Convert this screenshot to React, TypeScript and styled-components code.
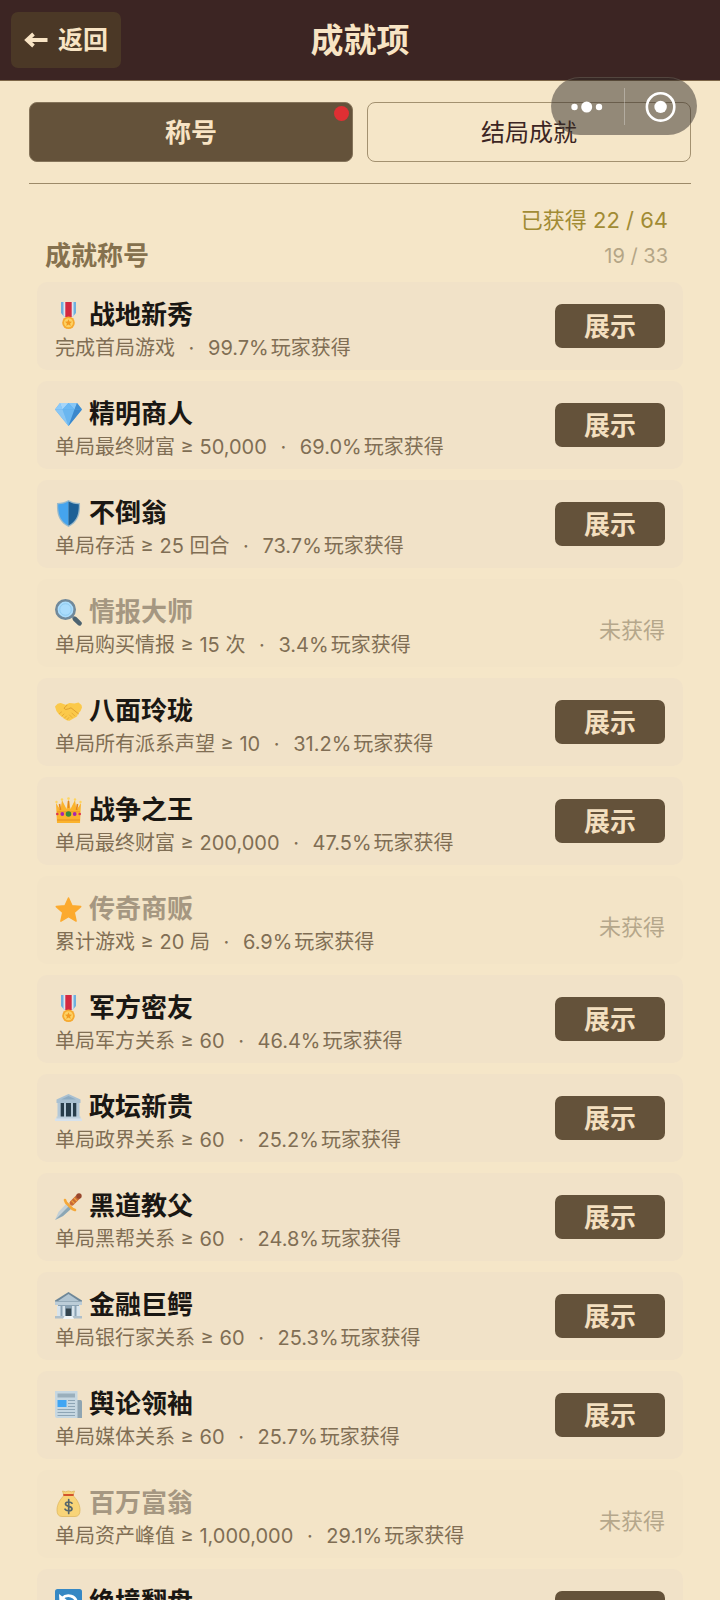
import React from "react";
import styled, { createGlobalStyle } from "styled-components";

const GlobalStyle = createGlobalStyle`
  *, *::before, *::after { box-sizing: border-box; }
  body {
    margin: 0;
    background: #f5e6c8;
    font-family: Inter, "Noto Sans CJK SC", sans-serif;
  }
  button { font-family: inherit; cursor: pointer; }
`;

const Screen = styled.div`
  display: flex;
  flex-direction: column;
  height: 100vh;
  overflow: hidden;
  background: #f5e6c8;
`;

const Header = styled.header`
  display: grid;
  grid-template-columns: 1fr auto 1fr;
  align-items: center;
  flex: none;
  height: 81px;
  padding: 0 11px;
  background: #3c2523;
  border-bottom: 1px solid #7d6648;
`;

const BackButton = styled.button`
  justify-self: start;
  display: flex;
  align-items: center;
  gap: 9px;
  height: 56px;
  padding: 0 13px;
  border: 0;
  border-radius: 7px;
  background: #4b3826;
  color: #f8e4c4;
  font-size: 25px;
  font-weight: 700;
  line-height: 36px;
`;

const PageTitle = styled.h1`
  margin: 0;
  color: #f8e4c4;
  font-size: 33px;
  font-weight: 700;
  line-height: 48px;
`;

const Capsule = styled.div`
  position: absolute;
  z-index: 2;
  top: 77px;
  right: 23px;
  display: flex;
  align-items: center;
  width: 146px;
  height: 58px;
  border: 1px solid rgba(150, 140, 125, 0.3);
  border-radius: 29px;
  background: rgba(50, 44, 40, 0.5);
`;

const CapsuleButton = styled.button`
  display: flex;
  flex: 1;
  align-items: center;
  justify-content: center;
  height: 100%;
  padding: 0;
  border: 0;
  background: none;
`;

const CapsuleRule = styled.span`
  width: 1px;
  height: 37px;
  background: rgba(255, 255, 255, 0.3);
`;

const Main = styled.main`
  flex: 1;
  min-height: 0;
  padding: 21px 29px 0;
  overflow-y: auto;
  scrollbar-width: none;
`;

const Tabs = styled.div`
  display: flex;
  gap: 14px;
  padding-bottom: 21px;
  border-bottom: 1px solid #9c8a69;
`;

const Tab = styled.button<{ $active?: boolean }>`
  position: relative;
  flex: 1;
  height: 60px;
  padding: 1px 0 0;
  border: 1px solid ${(p) => (p.$active ? "#85745a" : "#a39170")};
  border-radius: 8px;
  background: ${(p) => (p.$active ? "#64523a" : "transparent")};
  color: ${(p) => (p.$active ? "#f8e4c4" : "#3c2523")};
  font-size: ${(p) => (p.$active ? 26 : 24)}px;
  font-weight: ${(p) => (p.$active ? 700 : 400)};
  line-height: 36px;
`;

const UnreadDot = styled.span`
  position: absolute;
  top: 3px;
  right: 3px;
  width: 15px;
  height: 15px;
  border-radius: 50%;
  background: #df2f33;
`;

const Total = styled.p`
  margin: 20px 23px 0 0;
  color: #a18b34;
  font-size: 22px;
  line-height: 32px;
  text-align: right;
`;

const SectionHead = styled.div`
  display: flex;
  align-items: center;
  justify-content: space-between;
  margin-top: 2px;
  padding: 0 23px 0 16px;
`;

const SectionTitle = styled.h2`
  margin: 0;
  color: #85714e;
  font-size: 26px;
  font-weight: 700;
  line-height: 36px;
`;

const SectionCount = styled.span`
  color: #b4a586;
  font-size: 20px;
  line-height: 28px;
`;

const List = styled.ul`
  display: flex;
  flex-direction: column;
  gap: 11px;
  margin: 8px 0 0;
  padding: 0 8px 24px;
  list-style: none;
`;

const Row = styled.li<{ $locked?: boolean }>`
  display: flex;
  align-items: center;
  justify-content: space-between;
  flex: none;
  height: 88px;
  padding: 0 18px;
  border-radius: 10px;
  background: ${(p) => (p.$locked ? "#f3e4c7" : "#f1e2c8")};
`;

const RowText = styled.div`
  display: flex;
  flex-direction: column;
  align-self: flex-start;
  padding-top: 15px;
`;

const RowTitle = styled.h3<{ $locked?: boolean }>`
  display: flex;
  align-items: center;
  gap: 7px;
  margin: 0;
  color: ${(p) => (p.$locked ? "#a59781" : "#1a1713")};
  font-size: 26px;
  font-weight: 700;
  line-height: 36px;
`;

const Detail = styled.p`
  display: flex;
  margin: 0;
  color: #806e54;
  font-size: 20px;
  line-height: 30px;
  white-space: nowrap;
`;

const Separator = styled.span`
  width: 33px;
  text-align: center;
`;

const Rate = styled.span`
  margin-right: 2px;
`;

const ShowButton = styled.button`
  width: 110px;
  height: 44px;
  padding: 2px 0 0;
  border: 0;
  border-radius: 7px;
  background: #64523a;
  color: #f3dfbf;
  font-size: 26px;
  font-weight: 700;
  line-height: 36px;
`;

const LockedLabel = styled.span`
  padding-top: 14px;
  color: #b5a78b;
  font-size: 22px;
  line-height: 32px;
`;

const Icon = ({ children }: { children: React.ReactNode }) => (
  <svg width="27" height="27" viewBox="0 0 27 27" aria-hidden="true">
    {children}
  </svg>
);

const Medal = () => (
  <Icon>
    <path d="M6 0h15v11l-3 3.500H9L6 11z" fill="#6fb0df" />
    <path d="M8.500 0h10v14.500h-10z" fill="#dfe6ee" />
    <path d="M10.300 0h6.400v15h-6.400z" fill="#d5293f" />
    <circle cx="13.500" cy="20.700" r="6.300" fill="#f6a92f" />
    <circle cx="13.500" cy="20.700" r="4.500" fill="#fdd365" />
    <path d="M13.500 17.200l1 2.400 2.500.2-1.900 1.700.6 2.500-2.200-1.400-2.200 1.400.6-2.500-1.900-1.700 2.500-.2z" fill="#f39a20" />
  </Icon>
);

const Gem = () => (
  <Icon>
    <path d="M5 2h17l5 6.500L13.500 25 0 8.500z" fill="#58adef" />
    <path d="M5 2l2.500 6.500H0z" fill="#8ccafa" />
    <path d="M5 2h8.500l-6 6.500z" fill="#a6d5f8" />
    <path d="M13.500 2H22l-2.500 6.500z" fill="#87c7f6" />
    <path d="M13.500 2l6 6.500h-12z" fill="#6bb9f4" />
    <path d="M22 2l5 6.500h-7.500z" fill="#4290d2" />
    <path d="M7.500 8.500h12l-6 16.500z" fill="#6ab6f0" />
    <path d="M0 8.500h7.500l6 16.500z" fill="#8ac6f3" />
    <path d="M19.500 8.500H27L13.500 25z" fill="#3b87cb" />
  </Icon>
);

const Shield = () => (
  <Icon>
    <path d="M13.500 0c3 2 7 3 11.500 3 .5 11-1.500 19-11.500 24C3.500 22 1.500 14 2 3c4.500 0 8.500-1 11.500-3z" fill="#9ab9c9" />
    <path d="M13.500 1.500c-3 1.700-6 2.500-10.300 2.700C3 14 5 21 13.500 25.500z" fill="#45a4ee" />
    <path d="M13.500 1.500c3 1.700 6 2.500 10.300 2.700C24 14 22 21 13.500 25.500z" fill="#1d6096" />
  </Icon>
);

const Magnifier = () => (
  <Icon>
    <path d="M17 17l2.500 2.500" stroke="#8296a1" strokeWidth="3" />
    <path d="M20 20l4.500 4.300" stroke="#4d6370" strokeWidth="4.600" strokeLinecap="round" />
    <circle cx="10.500" cy="10.500" r="9.200" fill="#aadcfc" stroke="#71899a" strokeWidth="2.600" />
    <circle cx="10.500" cy="10.500" r="5.800" fill="none" stroke="#8fcbf0" strokeWidth="1" />
  </Icon>
);

const Handshake = () => (
  <Icon>
    <path d="M0 8.500Q3 4.500 6.500 5.200l4 1.500 4-1.700 5 .5 4-1Q26.500 6 27 9.500q-1 4-4 6.500l-1 2.500-7.500 4.200q-2.500 0-4.500-1.500L4 16.500Q.5 12.500 0 8.500z" fill="#fbc94a" />
    <path d="M12 7.200L9 10.200q1 2.300 4.500.6l2.500-1 7.500 6" fill="none" stroke="#dfa030" strokeWidth="1" strokeLinecap="round" />
    <path d="M4.500 15.500l2-1.500M7 18l2-2M9.500 20l2-2M12.300 21.500l1.400-1.800M17 19.500l-2.500-2.500M19.800 18l-3-3" stroke="#e3a734" strokeWidth=".9" strokeLinecap="round" />
  </Icon>
);

const Crown = () => (
  <Icon>
    <path d="M2 26L1 6l4.500 7L7 3l4.500 9L13.500 2l2 10L20 3l1.500 10L26 6l-1 20z" fill="#fbb32d" />
    <path d="M2 14.500h23v.8H2zM2 22.500h23v1H2z" fill="#e58d1e" />
    <path d="M4.500 7l1 6M13.500 4v7M22.500 7l-1 6" stroke="#e3851c" strokeWidth="1.600" />
    <circle cx="1.500" cy="5" r="1.200" fill="#ffd45d" />
    <circle cx="7" cy="2.500" r="1.200" fill="#ffd45d" />
    <circle cx="13.500" cy="1.500" r="1.300" fill="#ffd45d" />
    <circle cx="20" cy="2.500" r="1.200" fill="#ffd45d" />
    <circle cx="25.500" cy="5" r="1.200" fill="#ffd45d" />
    <circle cx="13.500" cy="17" r="2.800" fill="#388e3c" />
    <circle cx="7.300" cy="17" r="1.900" fill="#a625b2" />
    <circle cx="19.700" cy="17" r="1.900" fill="#a625b2" />
    <circle cx="2.300" cy="17" r="1.300" fill="#df3450" />
    <circle cx="24.700" cy="17" r="1.300" fill="#df3450" />
  </Icon>
);

const Star = () => (
  <Icon>
    <path
      d="M13.500 2l3.500 7.700 8.700.9-6.500 5.800 1.900 8.700-7.600-4.500-7.600 4.500 1.900-8.700-6.500-5.800 8.700-.9z"
      fill="#fcaa2e"
      stroke="#fcaa2e"
      strokeWidth="1.500"
      strokeLinejoin="round"
    />
  </Icon>
);

const Government = () => (
  <Icon>
    <path d="M4.500 8h18v15h-18z" fill="#283d4b" />
    <path d="M13.500 0L25.500 5.500V9h-24V5.500z" fill="#a9c0d1" />
    <path d="M13.500 2L21 5.500H6z" fill="#8dabc2" />
    <path d="M2.500 9h3.200v14H2.500zM9 9h2v14H9zM16 9h2v14h-2zM21.300 9h3.200v14h-3.200z" fill="#b4c8d7" />
    <path d="M1.500 22.500h24V25h-24z" fill="#bfd0dd" />
    <path d="M0 24.500h27V27H0z" fill="#d7e2ec" />
  </Icon>
);

const Dagger = () => (
  <Icon>
    <path d="M12 10L3.500 19 0 27l8-4 9-8z" fill="#c3d0d7" />
    <path d="M14.500 12.500L0 27l8-4 9-8z" fill="#8ba6b4" />
    <path d="M17 10l6-6" stroke="#c96a37" strokeWidth="5" strokeLinecap="round" />
    <path d="M16.500 7.500l3 3M19 5l3 3" stroke="#eba23c" strokeWidth="1.200" />
    <circle cx="24" cy="3" r="2.700" fill="#98472c" />
    <path d="M10 7l1 2.500 6.500 6.500 2.500 1" fill="none" stroke="#f5a839" strokeWidth="2.600" strokeLinecap="round" strokeLinejoin="round" />
  </Icon>
);

const Bank = () => (
  <Icon>
    <path d="M3 12h21v12H3z" fill="#8ba3b4" />
    <path d="M13.500 0L27 8.500V12H0V8.500z" fill="#6e8798" />
    <path d="M13.500 2L24 9H3z" fill="#b2c5d1" />
    <path d="M0 9.500h27V13H0z" fill="#bccdd8" />
    <path d="M2 14h3.500v10H2zM7.500 14H10v10H7.500zM17 14h2.500v10H17zM21.500 14H25v10h-3.500z" fill="#d8e4ec" />
    <path d="M10.800 16.500h5.400V24h-5.400z" fill="#34454f" />
    <path d="M0 24h27v2.500H0z" fill="#aebfca" />
    <path d="M9.500 24h8l1.500 3H8z" fill="#eef3f5" />
  </Icon>
);

const Newspaper = () => (
  <Icon>
    <path d="M20 9h5.500q1.500 0 1.500 1.500V27h-5z" fill="#8fa5b2" />
    <path d="M0 0h22.500v27H2q-2 0-2-2z" fill="#c6d7e1" />
    <path d="M2.500 2.500h17.500v4H2.500z" fill="#9aafbc" />
    <path d="M2.500 9h9v7h-9z" fill="#3fa5f3" />
    <path d="M13 9.500h7M13 12.500h7M13 15.500h7M2.500 18.500H20M2.500 21.500H20M2.500 24.500H20" stroke="#8da5b5" strokeWidth="1.200" />
  </Icon>
);

const MoneyBag = () => (
  <Icon>
    <path d="M9 5.500C5.500 9 2 14 2 20q0 6.500 5 6.500h13q5 0 5-6.500c0-6-3.500-11-7-14.500z" fill="#f8d478" stroke="#e0b860" strokeWidth=".8" />
    <path d="M7.500 1q3 1.500 6 0 3 1.500 6 0L18 5.500H9z" fill="#f8d478" stroke="#e0b860" strokeWidth=".8" />
    <path d="M9 5h9" stroke="#d2542d" strokeWidth="1.800" strokeLinecap="round" />
    <path d="M17 13.200c-1-1.500-6.500-2-6.500.8 0 3 6.500 1.700 6.500 4.700 0 3-6 2.600-7 .5M13.700 9.500v14" fill="none" stroke="#56666b" strokeWidth="1.700" strokeLinecap="round" />
  </Icon>
);

const Reverse = () => (
  <Icon>
    <rect width="27" height="27" rx="2.500" fill="#3688c4" />
    <path d="M7 9.500c5-5 14.500-3 14.500 5S12 24 7 19" fill="none" stroke="#fff" strokeWidth="2.800" />
    <path d="M4 5l.5 8.500 8-2z" fill="#fff" />
  </Icon>
);

type Achievement = {
  icon: React.FC;
  name: string;
  goal?: string;
  rate?: string;
  locked?: boolean;
};

const achievements: Achievement[] = [
  { icon: Medal, name: "战地新秀", goal: "完成首局游戏", rate: "99.7%" },
  { icon: Gem, name: "精明商人", goal: "单局最终财富 ≥ 50,000", rate: "69.0%" },
  { icon: Shield, name: "不倒翁", goal: "单局存活 ≥ 25 回合", rate: "73.7%" },
  { icon: Magnifier, name: "情报大师", goal: "单局购买情报 ≥ 15 次", rate: "3.4%", locked: true },
  { icon: Handshake, name: "八面玲珑", goal: "单局所有派系声望 ≥ 10", rate: "31.2%" },
  { icon: Crown, name: "战争之王", goal: "单局最终财富 ≥ 200,000", rate: "47.5%" },
  { icon: Star, name: "传奇商贩", goal: "累计游戏 ≥ 20 局", rate: "6.9%", locked: true },
  { icon: Medal, name: "军方密友", goal: "单局军方关系 ≥ 60", rate: "46.4%" },
  { icon: Government, name: "政坛新贵", goal: "单局政界关系 ≥ 60", rate: "25.2%" },
  { icon: Dagger, name: "黑道教父", goal: "单局黑帮关系 ≥ 60", rate: "24.8%" },
  { icon: Bank, name: "金融巨鳄", goal: "单局银行家关系 ≥ 60", rate: "25.3%" },
  { icon: Newspaper, name: "舆论领袖", goal: "单局媒体关系 ≥ 60", rate: "25.7%" },
  { icon: MoneyBag, name: "百万富翁", goal: "单局资产峰值 ≥ 1,000,000", rate: "29.1%", locked: true },
  { icon: Reverse, name: "绝境翻盘" },
];

const AchievementRow = ({ icon: Glyph, name, goal, rate, locked }: Achievement) => (
  <Row $locked={locked}>
    <RowText>
      <RowTitle $locked={locked}>
        <Glyph />
        {name}
      </RowTitle>
      {goal && (
        <Detail>
          <span>{goal}</span>
          <Separator>·</Separator>
          <Rate>{rate}</Rate>
          <span>玩家获得</span>
        </Detail>
      )}
    </RowText>
    {locked ? <LockedLabel>未获得</LockedLabel> : <ShowButton type="button">展示</ShowButton>}
  </Row>
);

export default function App() {
  return (
    <Screen>
      <GlobalStyle />
      <Header>
        <BackButton type="button">
          <svg width="25" height="16" viewBox="0 0 25 16" aria-hidden="true">
            <path d="M9.500 2L3 8l6.500 6M3 8h20.500" fill="none" stroke="currentColor" strokeWidth="3.800" />
          </svg>
          返回
        </BackButton>
        <PageTitle>成就项</PageTitle>
      </Header>
      <Capsule>
        <CapsuleButton type="button" aria-label="更多">
          <svg width="34" height="14" viewBox="0 0 34 14" fill="#fff" aria-hidden="true">
            <circle cx="3.500" cy="8" r="3.200" />
            <circle cx="15.700" cy="8" r="5.500" />
            <circle cx="28" cy="8" r="3.200" />
          </svg>
        </CapsuleButton>
        <CapsuleRule />
        <CapsuleButton type="button" aria-label="关闭">
          <svg width="32" height="32" viewBox="0 0 32 32" aria-hidden="true">
            <circle cx="16.600" cy="16.900" r="13.700" fill="none" stroke="#fff" strokeWidth="2.600" />
            <circle cx="16.600" cy="16.900" r="6.200" fill="#fff" />
          </svg>
        </CapsuleButton>
      </Capsule>
      <Main>
        <Tabs role="tablist">
          <Tab $active type="button" role="tab" aria-selected="true">
            称号
            <UnreadDot />
          </Tab>
          <Tab type="button" role="tab" aria-selected="false">
            结局成就
          </Tab>
        </Tabs>
        <Total>已获得 22 / 64</Total>
        <SectionHead>
          <SectionTitle>成就称号</SectionTitle>
          <SectionCount>19 / 33</SectionCount>
        </SectionHead>
        <List>
          {achievements.map((item) => (
            <AchievementRow key={item.name} {...item} />
          ))}
        </List>
      </Main>
    </Screen>
  );
}
